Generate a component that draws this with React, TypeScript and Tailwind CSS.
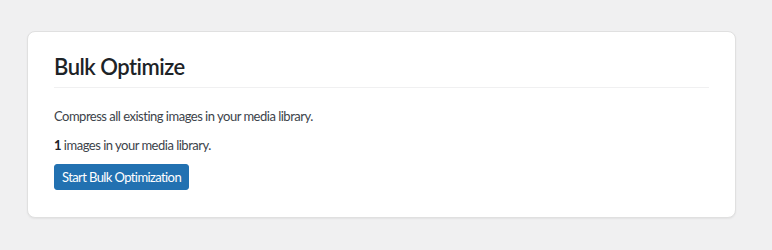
export default function App() {
  return (
    <div className="min-h-[250px] w-full bg-[#f0f0f1] pt-[31px] pl-[27px]" style={{ fontFamily: 'Lato, "Liberation Sans", sans-serif' }}>
      <div className="w-[709px] rounded-lg border border-[#e0e0e0] bg-white px-[26px] pt-[20px] pb-[27px] shadow-[0_1px_2px_rgba(0,0,0,0.06)]">
        <h2 className="border-b border-[#f0f0f1] pb-[5px] text-[22px] leading-[30px] font-semibold tracking-[-0.5px] text-[#1d2327]">
          Bulk Optimize
        </h2>
        <p className="mt-[18px] text-[13px] leading-[20px] tracking-[-0.5px] text-[#3c434a]">
          Compress all existing images in your media library.
        </p>
        <p className="mt-[9px] text-[13px] leading-[20px] tracking-[-0.5px] text-[#3c434a]">
          <strong className="font-bold text-[#1d2327]">1</strong> images in your media library.
        </p>
        <button className="mt-[9px] h-[26px] rounded-[3px] border border-[#2271b1] bg-[#2271b1] px-[7px] text-[13px] leading-[24px] tracking-[-0.6px] text-white">
          Start Bulk Optimization
        </button>
      </div>
    </div>
  )
}
